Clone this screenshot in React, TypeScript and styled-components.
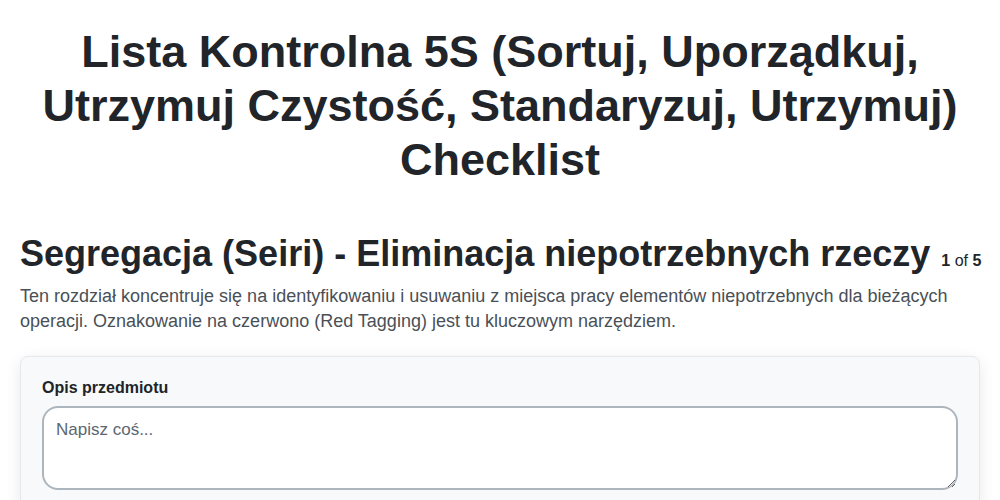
import styled, { createGlobalStyle } from "styled-components";

const GlobalStyle = createGlobalStyle`
  html, body {
    margin: 0;
    padding: 0;
    background: #fff;
  }

  body {
    font-family: "Liberation Sans", Arial, sans-serif;
    color: #212529;
  }

  * {
    box-sizing: border-box;
  }
`;

export default function App() {
  return (
    <>
      <GlobalStyle />
      <Page>
        <Title>
          Lista Kontrolna 5S (Sortuj, Uporządkuj, Utrzymuj Czystość,
          Standaryzuj, Utrzymuj) Checklist
        </Title>

        <Section>
          <SectionHeader>
            <SectionTitle>
              Segregacja (Seiri) - Eliminacja niepotrzebnych rzeczy
            </SectionTitle>
            <Counter>
              <b>1</b> of <b>5</b>
            </Counter>
          </SectionHeader>
          <Description>
            Ten rozdział koncentruje się na identyfikowaniu i usuwaniu z miejsca
            pracy elementów niepotrzebnych dla bieżących operacji. Oznakowanie
            na czerwono (Red Tagging) jest tu kluczowym narzędziem.
          </Description>

          <Card>
            <Label htmlFor="opis">Opis przedmiotu</Label>
            <TextArea id="opis" placeholder="Napisz coś..." rows={3} />
          </Card>
        </Section>
      </Page>
    </>
  );
}

const Page = styled.div`
  margin: 0 auto;
  padding: 25px 20px 40px;
  max-width: 1000px;
  width: 100%;
`;

const Title = styled.h1`
  margin: 0 0 45px;
  font-size: 45px;
  font-weight: 700;
  line-height: 1.2;
  text-align: center;
  color: #212529;
`;

const Section = styled.section`
  display: flex;
  flex-direction: column;
`;

const SectionHeader = styled.div`
  display: flex;
  align-items: baseline;
  flex-wrap: nowrap;
  gap: 11px;
`;

const SectionTitle = styled.h2`
  margin: 0;
  font-size: 36px;
  font-weight: 700;
  line-height: 1.2;
  white-space: nowrap;
  color: #212529;
`;

const Counter = styled.span`
  flex-shrink: 0;
  font-size: 16px;
  color: #212529;
  white-space: nowrap;

  b {
    font-weight: 700;
  }
`;

const Description = styled.p`
  margin: 9px 0 21px;
  font-size: 18px;
  line-height: 1.4;
  color: #495057;
`;

const Card = styled.div`
  padding: 21px 21px 21px;
  display: flex;
  flex-direction: column;
  gap: 9px;
  background: #f8f9fa;
  border: 1px solid #e6e8ec;
  border-radius: 8px;
  box-shadow: 0 4px 16px rgba(0, 0, 0, 0.09);
`;

const Label = styled.label`
  font-size: 16px;
  font-weight: 700;
  line-height: 1.2;
  color: #212529;
`;

const TextArea = styled.textarea`
  padding: 10px 12px;
  width: 100%;
  height: 84px;
  font-family: "Liberation Sans", Arial, sans-serif;
  font-size: 17px;
  line-height: 1.4;
  color: #212529;
  background: #fff;
  border: 2px solid #adb5bd;
  border-radius: 16px;
  resize: vertical;

  &::placeholder {
    color: #5c6670;
  }

  &:focus {
    outline: none;
    border-color: #86b7fe;
  }
`;
